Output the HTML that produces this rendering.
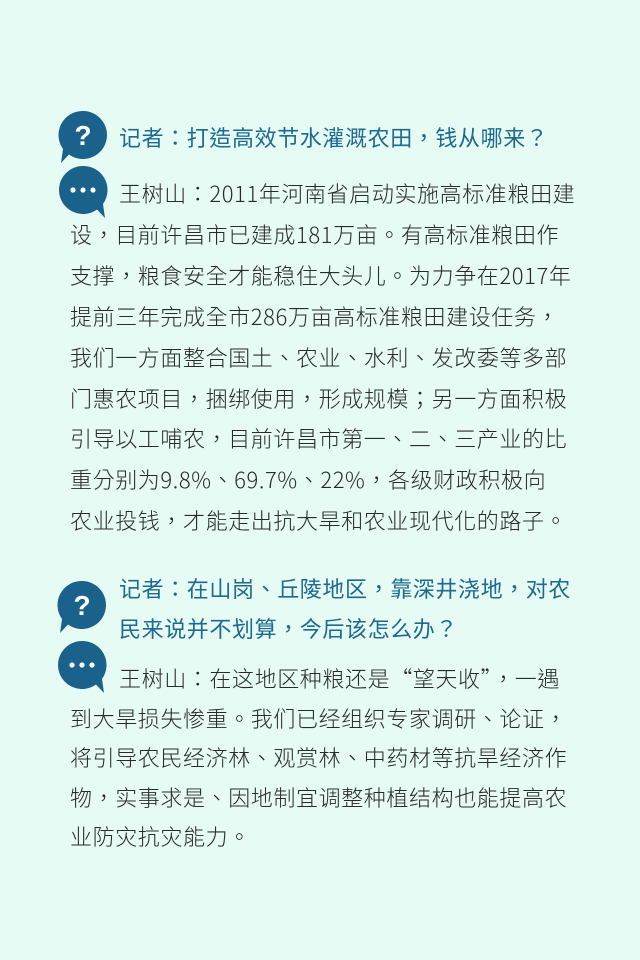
<!DOCTYPE html>
<html><head><meta charset="utf-8">
<style>
html,body{margin:0;padding:0}
body{width:640px;height:960px;background:#e5fbf4;position:relative;overflow:hidden;font-family:"Noto Sans CJK TC","Liberation Sans",sans-serif}
.l{position:absolute;white-space:nowrap;font-size:22px;line-height:40px;height:40px;color:#2a2a2a;letter-spacing:0.6px;font-weight:300}
.q{color:#1d6a91;font-weight:400}
svg{position:absolute}
</style></head><body>

<svg style="left:56px;top:109px" width="54" height="60" viewBox="0 0 54 60">
<path d="M27 2a24 24 0 1 1 -14 43.5 L5 54 L7 40 A24 24 0 0 1 27 2z" fill="#1a628b"/>
<text x="27" y="36" text-anchor="middle" font-family="Liberation Sans" font-weight="bold" font-size="28" fill="#fff">?</text>
</svg>
<svg style="left:56px;top:164px" width="54" height="60" viewBox="0 0 54 60">
<path d="M27 2a24 24 0 1 0 14 43.5 L49 54 L47 40 A24 24 0 0 0 27 2z" fill="#1a628b"/>
<circle cx="17" cy="26" r="2.6" fill="#fff"/><circle cx="27" cy="26" r="2.6" fill="#fff"/><circle cx="37" cy="26" r="2.6" fill="#fff"/>
</svg>

<div class="l q" style="left:119px;top:117px">记者：打造高效节水灌溉农田，钱从哪来？</div>
<div class="l" style="left:119px;top:173px">王树山：2011年河南省启动实施高标准粮田建</div>
<div class="l" style="left:70px;top:214px">设，目前许昌市已建成181万亩。有高标准粮田作</div>
<div class="l" style="left:70px;top:255px">支撑，粮食安全才能稳住大头儿。为力争在2017年</div>
<div class="l" style="left:70px;top:296px">提前三年完成全市286万亩高标准粮田建设任务，</div>
<div class="l" style="left:70px;top:337px">我们一方面整合国土、农业、水利、发改委等多部</div>
<div class="l" style="left:70px;top:378px">门惠农项目，捆绑使用，形成规模；另一方面积极</div>
<div class="l" style="left:70px;top:418px">引导以工哺农，目前许昌市第一、二、三产业的比</div>
<div class="l" style="left:70px;top:459px">重分别为9.8%、69.7%、22%，各级财政积极向</div>
<div class="l" style="left:70px;top:500px">农业投钱，才能走出抗大旱和农业现代化的路子。</div>

<svg style="left:55px;top:579px" width="54" height="60" viewBox="0 0 54 60">
<path d="M27 2a24 24 0 1 1 -14 43.5 L5 54 L7 40 A24 24 0 0 1 27 2z" fill="#1a628b"/>
<text x="27" y="36" text-anchor="middle" font-family="Liberation Sans" font-weight="bold" font-size="28" fill="#fff">?</text>
</svg>
<svg style="left:55px;top:639px" width="54" height="60" viewBox="0 0 54 60">
<path d="M27 2a24 24 0 1 0 14 43.5 L49 54 L47 40 A24 24 0 0 0 27 2z" fill="#1a628b"/>
<circle cx="17" cy="26" r="2.6" fill="#fff"/><circle cx="27" cy="26" r="2.6" fill="#fff"/><circle cx="37" cy="26" r="2.6" fill="#fff"/>
</svg>

<div class="l q" style="left:119px;top:568px">记者：在山岗、丘陵地区，靠深井浇地，对农</div>
<div class="l q" style="left:119px;top:608px">民来说并不划算，今后该怎么办？</div>
<div class="l" style="left:119px;top:658px">王树山：在这地区种粮还是“望天收”，一遇</div>
<div class="l" style="left:70px;top:698px">到大旱损失惨重。我们已经组织专家调研、论证，</div>
<div class="l" style="left:70px;top:737px">将引导农民经济林、观赏林、中药材等抗旱经济作</div>
<div class="l" style="left:70px;top:777px">物，实事求是、因地制宜调整种植结构也能提高农</div>
<div class="l" style="left:70px;top:816px">业防灾抗灾能力。</div>

</body></html>
